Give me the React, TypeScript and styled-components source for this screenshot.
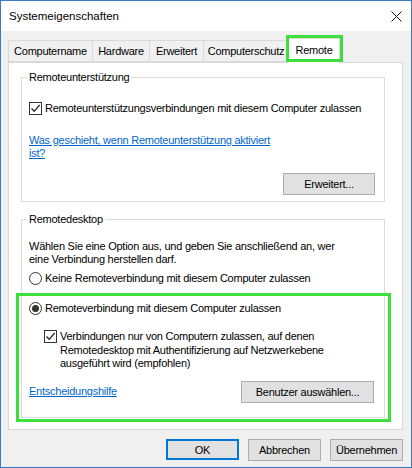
import React from "react";
import styled, { createGlobalStyle } from "styled-components";

const FONT = `"Liberation Sans", Arial, sans-serif`;

const GlobalStyle = createGlobalStyle`
  html, body { margin: 0; padding: 0; background: #ffffff; }
  body { font-family: ${FONT}; font-size: 11px; letter-spacing: -0.25px; color: #000; }
  * { box-sizing: border-box; }
`;

const Window = styled.div`
  width: 412px;
  height: 468px;
  border: 1px solid #3a7cc4;
  display: flex;
  flex-direction: column;
  background: #f0f0f0;
`;

const TitleBar = styled.div`
  height: 30px;
  background: #ffffff;
  display: flex;
  align-items: center;
  justify-content: space-between;
  padding: 0 9px 0 8px;
`;

const TitleText = styled.span`
  font-size: 11.5px;
  letter-spacing: 0;
`;

const CloseButton = styled.div`
  width: 12px;
  height: 12px;
  display: flex;
  align-items: center;
  justify-content: center;
`;

const Body = styled.div`
  flex: 1;
  display: flex;
  flex-direction: column;
  padding: 6px 8px 0 7px;
`;

const TabStrip = styled.div`
  display: flex;
  align-items: flex-end;
  height: 25px;
  position: relative;
  z-index: 1;
`;

const Tab = styled.div<{ $w: number; $active?: boolean }>`
  width: ${(p) => p.$w}px;
  height: ${(p) => (p.$active ? 25 : 22)}px;
  margin-bottom: ${(p) => (p.$active ? -1 : 0)}px;
  background: ${(p) => (p.$active ? "#ffffff" : "#f0f0f0")};
  border: 1px solid #d9d9d9;
  border-bottom: ${(p) => (p.$active ? "none" : "1px solid #d9d9d9")};
  margin-left: -1px;
  display: flex;
  align-items: center;
  justify-content: center;
  padding-bottom: ${(p) => (p.$active ? 3 : 0)}px;
  position: relative;
  white-space: nowrap;
  &:first-child { margin-left: 0; }
`;

const TabHighlight = styled.div`
  position: absolute;
  left: -3px;
  right: -4px;
  top: -4px;
  bottom: 1px;
  border: 3px solid #3ddf3d;
  pointer-events: none;
`;

const Panel = styled.div`
  background: #ffffff;
  border: 1px solid #d9d9d9;
  height: 368px;
  padding: 7px 17px 0 12px;
  display: flex;
  flex-direction: column;
`;

const Group = styled.fieldset<{ $mt?: number }>`
  margin: ${(p) => p.$mt ?? 0}px 0 0 0;
  border: 1px solid #dcdcdc;
  padding: 0 9px 6px 7px;
  min-width: 0;
`;

const GroupTitle = styled.legend`
  padding: 0 2px;
  margin-left: -2px;
  line-height: 15px;
`;

const Row = styled.div<{ $mt?: number; $indent?: number }>`
  display: flex;
  align-items: center;
  gap: 3px;
  margin-top: ${(p) => p.$mt ?? 0}px;
  margin-left: ${(p) => p.$indent ?? 0}px;
  line-height: 15px;
  white-space: nowrap;
`;

const TopRow = styled(Row)`
  align-items: flex-start;
  line-height: 13.5px;
`;

const CheckBox = styled.span<{ $mt?: number }>`
  width: 13px;
  height: 13px;
  flex: none;
  border: 1px solid #333333;
  background: #ffffff;
  display: flex;
  align-items: center;
  justify-content: center;
  margin-top: ${(p) => p.$mt ?? 0}px;
`;

const Radio = styled.span<{ $on?: boolean }>`
  width: 13px;
  height: 13px;
  flex: none;
  border: 1px solid #333333;
  border-radius: 50%;
  background: #ffffff;
  display: flex;
  align-items: center;
  justify-content: center;
  &::after {
    content: "";
    display: ${(p) => (p.$on ? "block" : "none")};
    width: 7px;
    height: 7px;
    border-radius: 50%;
    background: #333333;
  }
`;

const Link = styled.a<{ $mt?: number }>`
  display: block;
  color: #0066cc;
  text-decoration: underline;
  line-height: 13px;
  white-space: nowrap;
  margin-top: ${(p) => p.$mt ?? 0}px;
  cursor: pointer;
`;

const Paragraph = styled.div<{ $mt?: number }>`
  line-height: 13px;
  white-space: nowrap;
  margin-top: ${(p) => p.$mt ?? 0}px;
`;

const ButtonRow = styled.div<{ $mt?: number }>`
  display: flex;
  justify-content: space-between;
  align-items: center;
  margin-top: ${(p) => p.$mt ?? 0}px;
`;

const Button = styled.button<{ $w: number; $primary?: boolean }>`
  width: ${(p) => p.$w}px;
  height: ${(p) => (p.$primary ? 21 : 22)}px;
  background: #e1e1e1;
  border: ${(p) => (p.$primary ? "2px solid #0078d7" : "1px solid #adadad")};
  font-family: ${FONT};
  font-size: 11px;
  letter-spacing: -0.25px;
  color: #000;
  padding: 0;
  margin: 0;
  border-radius: 0;
  white-space: nowrap;
`;

const Highlight = styled.div`
  border: 3px solid #3ddf3d;
  margin: 7px -16px -11px -13px;
  padding: 5px 14px 16px 10px;
  position: relative;
`;

const Footer = styled.div`
  display: flex;
  justify-content: flex-end;
  gap: 9px;
  padding-top: 9px;
`;

const Spacer = styled.div`
  flex: 1;
`;

const CheckMark = () => (
  <svg width="11" height="11" viewBox="0 0 11 11">
    <path d="M1.5 5.5 L4.2 8.3 L9.6 2" fill="none" stroke="#222" strokeWidth="1.3" />
  </svg>
);

const CloseIcon = () => (
  <svg width="11" height="11" viewBox="0 0 11 11">
    <path d="M0.5 0.5 L10.5 10.5 M10.5 0.5 L0.5 10.5" stroke="#111" strokeWidth="1" />
  </svg>
);

const tabs: { label: string; w: number; active?: boolean }[] = [
  { label: "Computername", w: 85 },
  { label: "Hardware", w: 58 },
  { label: "Erweitert", w: 55 },
  { label: "Computerschutz", w: 86 },
  { label: "Remote", w: 52, active: true },
];

export default function App() {
  return (
    <>
      <GlobalStyle />
      <Window>
        <TitleBar>
          <TitleText>Systemeigenschaften</TitleText>
          <CloseButton>
            <CloseIcon />
          </CloseButton>
        </TitleBar>
        <Body>
          <TabStrip>
            {tabs.map((t) => (
              <Tab key={t.label} $w={t.w} $active={t.active}>
                {t.label}
                {t.active && <TabHighlight />}
              </Tab>
            ))}
          </TabStrip>
          <Panel>
            <Group>
              <GroupTitle>Remoteunterstützung</GroupTitle>
              <Row $mt={16}>
                <CheckBox>
                  <CheckMark />
                </CheckBox>
                <span>Remoteunterstützungsverbindungen mit diesem Computer zulassen</span>
              </Row>
              <Link $mt={18}>
                Was geschieht, wenn Remoteunterstützung aktiviert
                <br />
                ist?
              </Link>
              <ButtonRow $mt={13}>
                <Spacer />
                <Button $w={92}>Erweitert...</Button>
              </ButtonRow>
            </Group>
            <Group $mt={10}>
              <GroupTitle>Remotedesktop</GroupTitle>
              <Paragraph $mt={13}>
                Wählen Sie eine Option aus, und geben Sie anschließend an, wer
                <br />
                eine Verbindung herstellen darf.
              </Paragraph>
              <Row $mt={5}>
                <Radio />
                <span>Keine Remoteverbindung mit diesem Computer zulassen</span>
              </Row>
              <Highlight>
                <Row>
                  <Radio $on />
                  <span>Remoteverbindung mit diesem Computer zulassen</span>
                </Row>
                <TopRow $mt={14} $indent={15}>
                  <CheckBox $mt={0}>
                    <CheckMark />
                  </CheckBox>
                  <span>
                    Verbindungen nur von Computern zulassen, auf denen
                    <br />
                    Remotedesktop mit Authentifizierung auf Netzwerkebene
                    <br />
                    ausgeführt wird (empfohlen)
                  </span>
                </TopRow>
                <ButtonRow $mt={10}>
                  <Link>Entscheidungshilfe</Link>
                  <Button $w={133}>Benutzer auswählen...</Button>
                </ButtonRow>
              </Highlight>
            </Group>
          </Panel>
          <Footer>
            <Button $w={73} $primary>
              OK
            </Button>
            <Button $w={73}>Abbrechen</Button>
            <Button $w={73}>Übernehmen</Button>
          </Footer>
        </Body>
      </Window>
    </>
  );
}
